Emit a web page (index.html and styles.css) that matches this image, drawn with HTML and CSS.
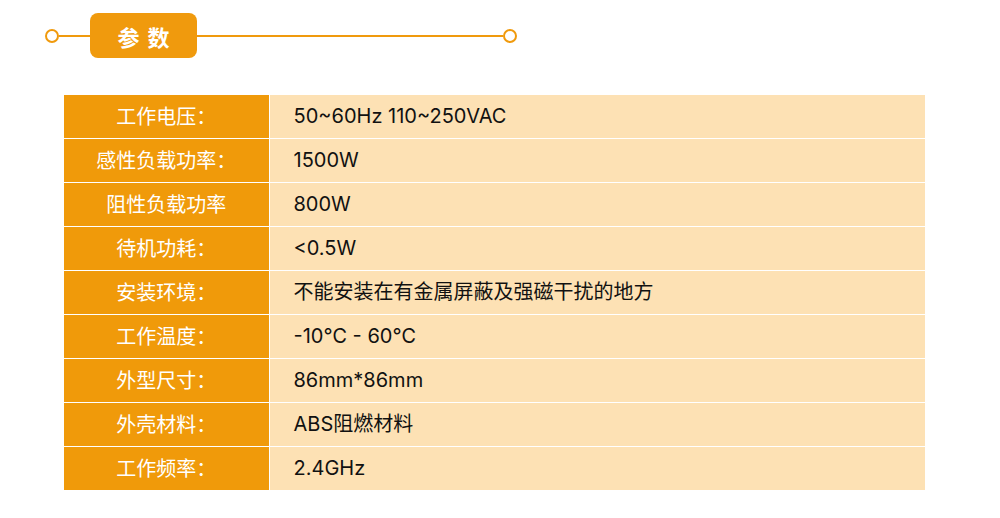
FILE: index.html
```html
<!DOCTYPE html>
<html lang="zh-CN">
<head>
<meta charset="utf-8">
<title>参数</title>
<link rel="stylesheet" href="styles.css">
</head>
<body>
<div class="page">
  <div class="title-bar">
    <span class="dot"></span>
    <span class="line short"></span>
    <span class="badge">参数</span>
    <span class="line long"></span>
    <span class="dot"></span>
  </div>
  <table class="spec">
    <tbody>
      <tr><td class="k">工作电压<span class="colon">：</span></td><td class="v">50~60Hz 110~250VAC</td></tr>
      <tr><td class="k">感性负载功率<span class="colon">：</span></td><td class="v">1500W</td></tr>
      <tr><td class="k">阻性负载功率</td><td class="v">800W</td></tr>
      <tr><td class="k">待机功耗<span class="colon">：</span></td><td class="v">&lt;0.5W</td></tr>
      <tr><td class="k">安装环境<span class="colon">：</span></td><td class="v">不能安装在有金属屏蔽及强磁干扰的地方</td></tr>
      <tr><td class="k">工作温度<span class="colon">：</span></td><td class="v">-10℃ - 60℃</td></tr>
      <tr><td class="k">外型尺寸<span class="colon">：</span></td><td class="v">86mm*86mm</td></tr>
      <tr><td class="k">外壳材料<span class="colon">：</span></td><td class="v">ABS阻燃材料</td></tr>
      <tr><td class="k">工作频率<span class="colon">：</span></td><td class="v">2.4GHz</td></tr>
    </tbody>
  </table>
</div>
</body>
</html>
```

FILE: styles.css
```css
html, body {
  margin: 0;
  padding: 0;
  background: #fff;
}
body {
  font-family: "Inter", "Noto Sans CJK SC", sans-serif;
}
.page {
  width: 1000px;
  height: 518px;
  overflow: hidden;
}
.title-bar {
  display: flex;
  align-items: center;
  margin-top: 13px;
  margin-left: 45px;
  height: 45px;
}
.dot {
  width: 14px;
  height: 14px;
  box-sizing: border-box;
  border: 2.5px solid #f09a0d;
  border-radius: 50%;
  background: #fff;
  flex: none;
}
.line {
  height: 2px;
  background: #f09a0d;
  flex: none;
}
.line.short { width: 31px; }
.line.long { width: 306px; }
.badge {
  width: 107px;
  height: 45px;
  background: #f09a0d;
  border-radius: 8px;
  color: #fff;
  font-family: "Noto Sans CJK SC", sans-serif;
  font-weight: 700;
  font-size: 22px;
  letter-spacing: 8px;
  display: flex;
  align-items: center;
  justify-content: center;
  padding-left: 8px;
  box-sizing: border-box;
  flex: none;
}
.spec {
  margin-top: 37px;
  margin-left: 64px;
  border-collapse: collapse;
  width: 861px;
  table-layout: fixed;
  font-size: 20px;
}
.spec td {
  height: 43px;
  padding: 0;
  box-sizing: border-box;
  vertical-align: middle;
  line-height: 1.2;
}
.spec tr + tr td {
  border-top: 1px solid #fff;
  height: 44px;
}
.spec .k {
  width: 205px;
  background: #f09a0a;
  color: #fff;
  text-align: center;
  border-right: 1px solid #fff;
  font-family: "Noto Sans CJK SC", sans-serif;
}
.spec .k .colon {
  font-family: "Noto Sans CJK TC", sans-serif;
}
.spec .v {
  background: #fde1b4;
  color: #111;
  padding-left: 24px;
}
```
